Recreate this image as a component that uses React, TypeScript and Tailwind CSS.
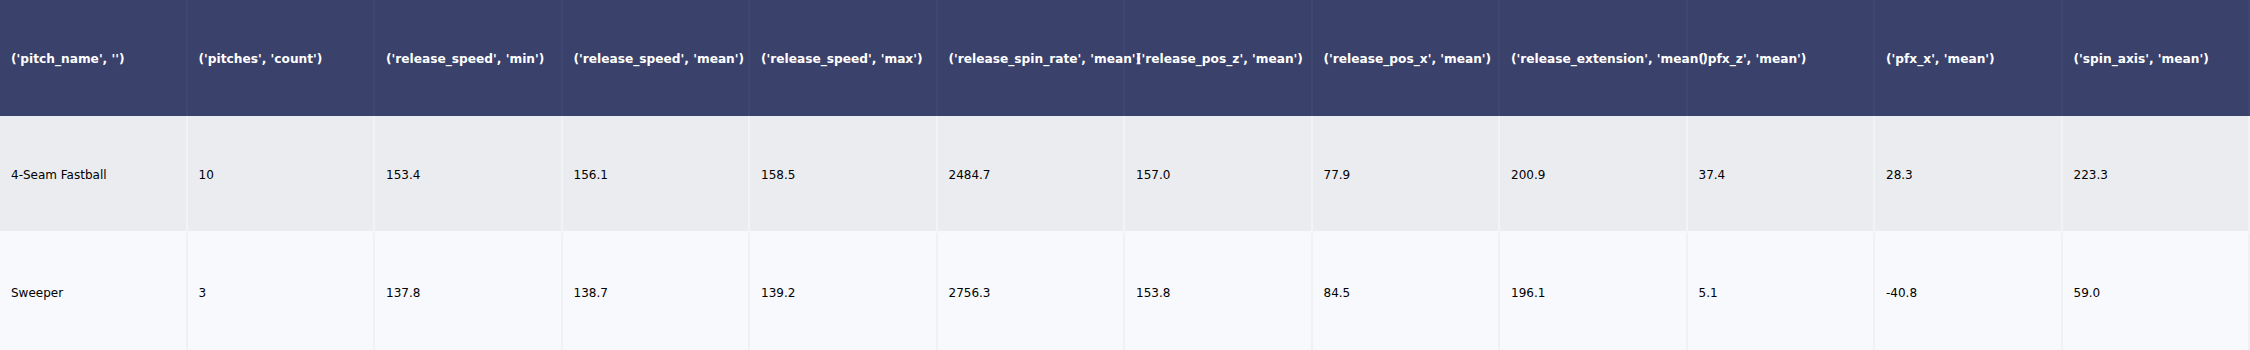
const columns = [
  "('pitch_name', '')",
  "('pitches', 'count')",
  "('release_speed', 'min')",
  "('release_speed', 'mean')",
  "('release_speed', 'max')",
  "('release_spin_rate', 'mean')",
  "('release_pos_z', 'mean')",
  "('release_pos_x', 'mean')",
  "('release_extension', 'mean')",
  "('pfx_z', 'mean')",
  "('pfx_x', 'mean')",
  "('spin_axis', 'mean')",
];

const rows = [
  ["4-Seam Fastball", "10", "153.4", "156.1", "158.5", "2484.7", "157.0", "77.9", "200.9", "37.4", "28.3", "223.3"],
  ["Sweeper", "3", "137.8", "138.7", "139.2", "2756.3", "153.8", "84.5", "196.1", "5.1", "-40.8", "59.0"],
];

export default function App() {
  return (
    <div
      className="w-[2250px] h-[350px] grid grid-cols-12 grid-rows-[116px_117px_117px] overflow-hidden text-[12px]"
      style={{ fontFamily: '"DejaVu Sans", Verdana, sans-serif' }}
    >
      {/* header row - long labels spill over the next cell, as in the source */}
      {columns.map((col) => (
        <div
          key={col}
          className="flex items-center min-w-0 pl-[11px] pt-[3px] bg-[#3a416b] border-r-2 border-[#3f4670] text-white text-[12.2px] font-bold whitespace-nowrap"
        >
          <span className="relative z-10">{col}</span>
        </div>
      ))}

      {/* body rows, alternating shades */}
      {rows.map((row, i) =>
        row.map((cell, j) => (
          <div
            key={`${i}-${j}`}
            className={`flex items-center min-w-0 pl-[11px] pt-[3px] border-r-2 text-black whitespace-nowrap ${
              i % 2 === 0 ? "bg-[#ebecf0] border-[#f2f3f5] border-b-2 border-b-[#f8f9fc]" : "bg-[#f8f9fc] border-[#f0f1f4]"
            }`}
          >
            <span className="relative z-10">{cell}</span>
          </div>
        ))
      )}
    </div>
  );
}
